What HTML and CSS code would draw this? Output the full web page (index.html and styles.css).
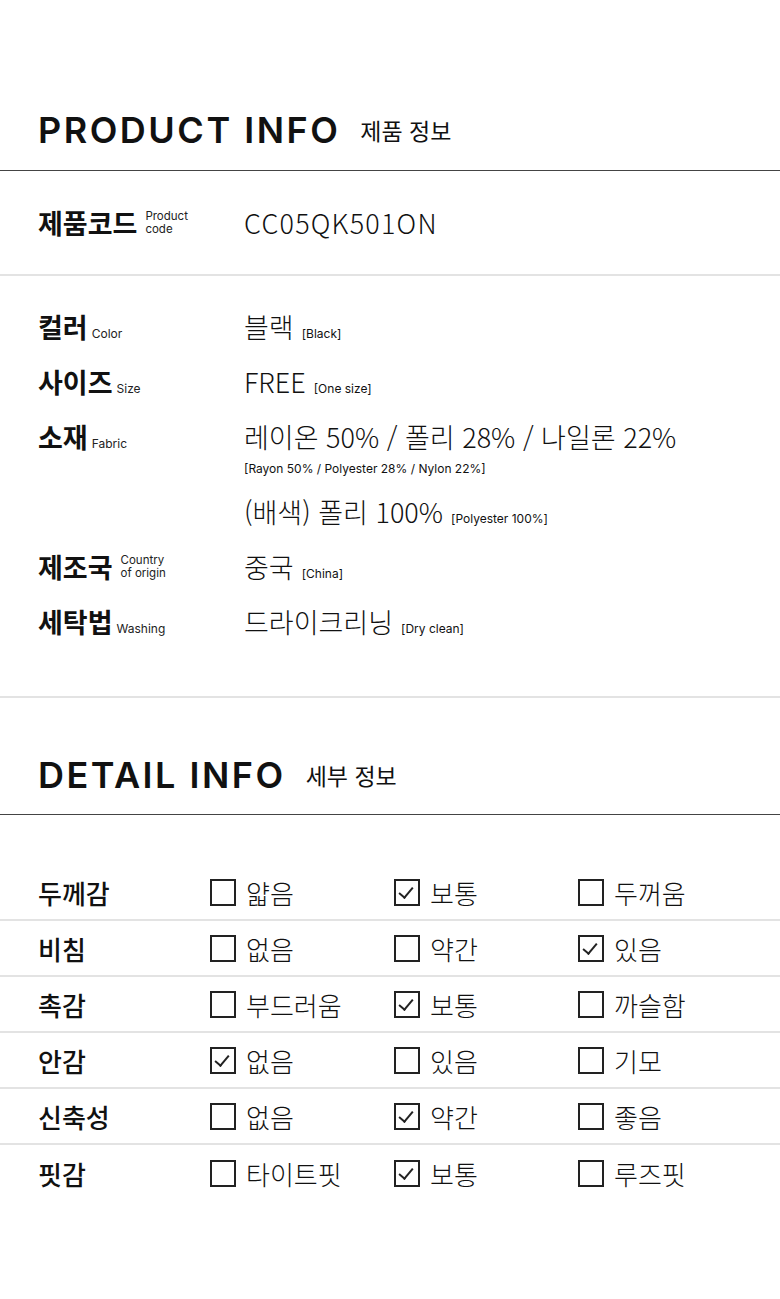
FILE: index.html
```html
<!DOCTYPE html>
<html lang="ko">

<head>
    <meta charset="UTF-8">
    <meta name="viewport" content="width=device-width, initial-scale=1.0">
    <title>Product Info</title>
    <link rel="stylesheet" href="styles.css">
</head>

<body>
    <!-- 제품 정보 -->
    <section class="info">
        <h2 class="title"><span class="title-en">PRODUCT INFO</span><span class="title-ko">제품 정보</span></h2>

        <div class="code-row">
            <div class="label">제품코드<span class="label-en two">Product<br>code</span></div>
            <div class="code">CC05QK501ON</div>
        </div>

        <div class="specs">
            <div class="spec">
                <div class="label">컬러<span class="label-en">Color</span></div>
                <div class="value">블랙<small>[Black]</small></div>
            </div>
            <div class="spec">
                <div class="label">사이즈<span class="label-en">Size</span></div>
                <div class="value">FREE<small>[One size]</small></div>
            </div>
            <div class="spec">
                <div class="label">소재<span class="label-en">Fabric</span></div>
                <div class="value">
                    <div>레이온 50% / 폴리 28% / 나일론 22%</div>
                    <div class="sub">[Rayon 50% / Polyester 28% / Nylon 22%]</div>
                    <div class="second">(배색) 폴리 100%<small>[Polyester 100%]</small></div>
                </div>
            </div>
            <div class="spec">
                <div class="label">제조국<span class="label-en two">Country<br>of origin</span></div>
                <div class="value">중국<small>[China]</small></div>
            </div>
            <div class="spec">
                <div class="label">세탁법<span class="label-en">Washing</span></div>
                <div class="value">드라이크리닝<small>[Dry clean]</small></div>
            </div>
        </div>
    </section>

    <!-- 세부 정보 -->
    <section class="detail">
        <h2 class="title"><span class="title-en">DETAIL INFO</span><span class="title-ko">세부 정보</span></h2>

        <div class="checks">
            <div class="check-row">
                <div class="check-label">두께감</div>
                <div class="opt"><span class="box"></span>얇음</div>
                <div class="opt"><span class="box on"></span>보통</div>
                <div class="opt"><span class="box"></span>두꺼움</div>
            </div>
            <div class="check-row">
                <div class="check-label">비침</div>
                <div class="opt"><span class="box"></span>없음</div>
                <div class="opt"><span class="box"></span>약간</div>
                <div class="opt"><span class="box on"></span>있음</div>
            </div>
            <div class="check-row">
                <div class="check-label">촉감</div>
                <div class="opt"><span class="box"></span>부드러움</div>
                <div class="opt"><span class="box on"></span>보통</div>
                <div class="opt"><span class="box"></span>까슬함</div>
            </div>
            <div class="check-row">
                <div class="check-label">안감</div>
                <div class="opt"><span class="box on"></span>없음</div>
                <div class="opt"><span class="box"></span>있음</div>
                <div class="opt"><span class="box"></span>기모</div>
            </div>
            <div class="check-row">
                <div class="check-label">신축성</div>
                <div class="opt"><span class="box"></span>없음</div>
                <div class="opt"><span class="box on"></span>약간</div>
                <div class="opt"><span class="box"></span>좋음</div>
            </div>
            <div class="check-row">
                <div class="check-label">핏감</div>
                <div class="opt"><span class="box"></span>타이트핏</div>
                <div class="opt"><span class="box on"></span>보통</div>
                <div class="opt"><span class="box"></span>루즈핏</div>
            </div>
        </div>
    </section>
</body>

</html>
```

FILE: styles.css
```css
* {
    margin: 0;
    padding: 0;
    box-sizing: border-box;
}

body {
    background: #fff;
    color: #111;
    font-family: "Noto Sans CJK KR", "Noto Sans", sans-serif;
}

/* 섹션 제목 */
.title {
    display: flex;
    align-items: center;
    padding: 0 38px;
    height: 44px;
    margin-bottom: 18px;
    font-weight: normal;
}

.title-en {
    font-family: "Inter", "Liberation Sans", sans-serif;
    font-size: 36px;
    font-weight: 600;
    letter-spacing: 2.5px;
    line-height: 44px;
}

.title-ko {
    margin-left: 20px;
    font-size: 23px;
    font-weight: 400;
}

.info {
    padding-top: 108px;
    border-bottom: 2px solid #e3e3e3;
}

.code-row {
    display: grid;
    grid-template-columns: 206px 1fr;
    align-items: center;
    height: 106px;
    padding-left: 38px;
    border-top: 1px solid #444;
    border-bottom: 2px solid #e3e3e3;
}

.label {
    display: flex;
    align-items: baseline;
    height: 36px;
    font-size: 27px;
    font-weight: 700;
    line-height: 36px;
}

.label-en {
    margin-left: 4px;
    font-family: "Inter", "Liberation Sans", sans-serif;
    font-size: 12px;
    font-weight: 400;
    line-height: 24px;
    color: #222;
}

.label-en.two {
    align-self: center;
    margin-left: 8px;
    font-size: 11.5px;
    line-height: 13px;
}

.code {
    font-size: 27px;
    font-weight: 300;
    letter-spacing: 1.2px;
}

.specs {
    padding: 33px 0 56px 38px;
}

.spec {
    display: grid;
    grid-template-columns: 206px 1fr;
    align-items: start;
    margin-bottom: 19px;
}

.spec:last-child {
    margin-bottom: 0;
}

.value {
    font-size: 27px;
    font-weight: 300;
    line-height: 36px;
}

.value small {
    margin-left: 8px;
    font-family: "Inter", "Liberation Sans", sans-serif;
    font-size: 12px;
    font-weight: 400;
    line-height: 1;
}

.value .sub {
    margin-top: 2px;
    font-family: "Inter", "Liberation Sans", sans-serif;
    font-size: 12px;
    font-weight: 400;
    line-height: 24px;
}

.value .second {
    margin-top: 13px;
}

/* 세부 정보 */
.detail {
    padding-top: 55px;
}

.detail .title {
    margin-bottom: 17px;
}

.checks {
    border-top: 1px solid #444;
    padding-top: 50px;
    padding-bottom: 90px;
}

.check-row {
    display: grid;
    grid-template-columns: 172px 184px 184px 1fr;
    align-items: center;
    height: 56px;
    padding-left: 38px;
    border-bottom: 2px solid #e3e3e3;
}

.check-row:last-child {
    border-bottom: 0;
}

.check-label {
    font-size: 26px;
    font-weight: 500;
}

.opt {
    display: flex;
    align-items: center;
    font-size: 26px;
    font-weight: 300;
}

.box {
    position: relative;
    width: 26px;
    height: 27px;
    margin-right: 10px;
    border: 2px solid #222;
}

.box.on::after {
    content: "";
    position: absolute;
    left: 6px;
    top: 3px;
    width: 6px;
    height: 12px;
    border-right: 2px solid #222;
    border-bottom: 2px solid #222;
    transform: rotate(40deg);
}
```
